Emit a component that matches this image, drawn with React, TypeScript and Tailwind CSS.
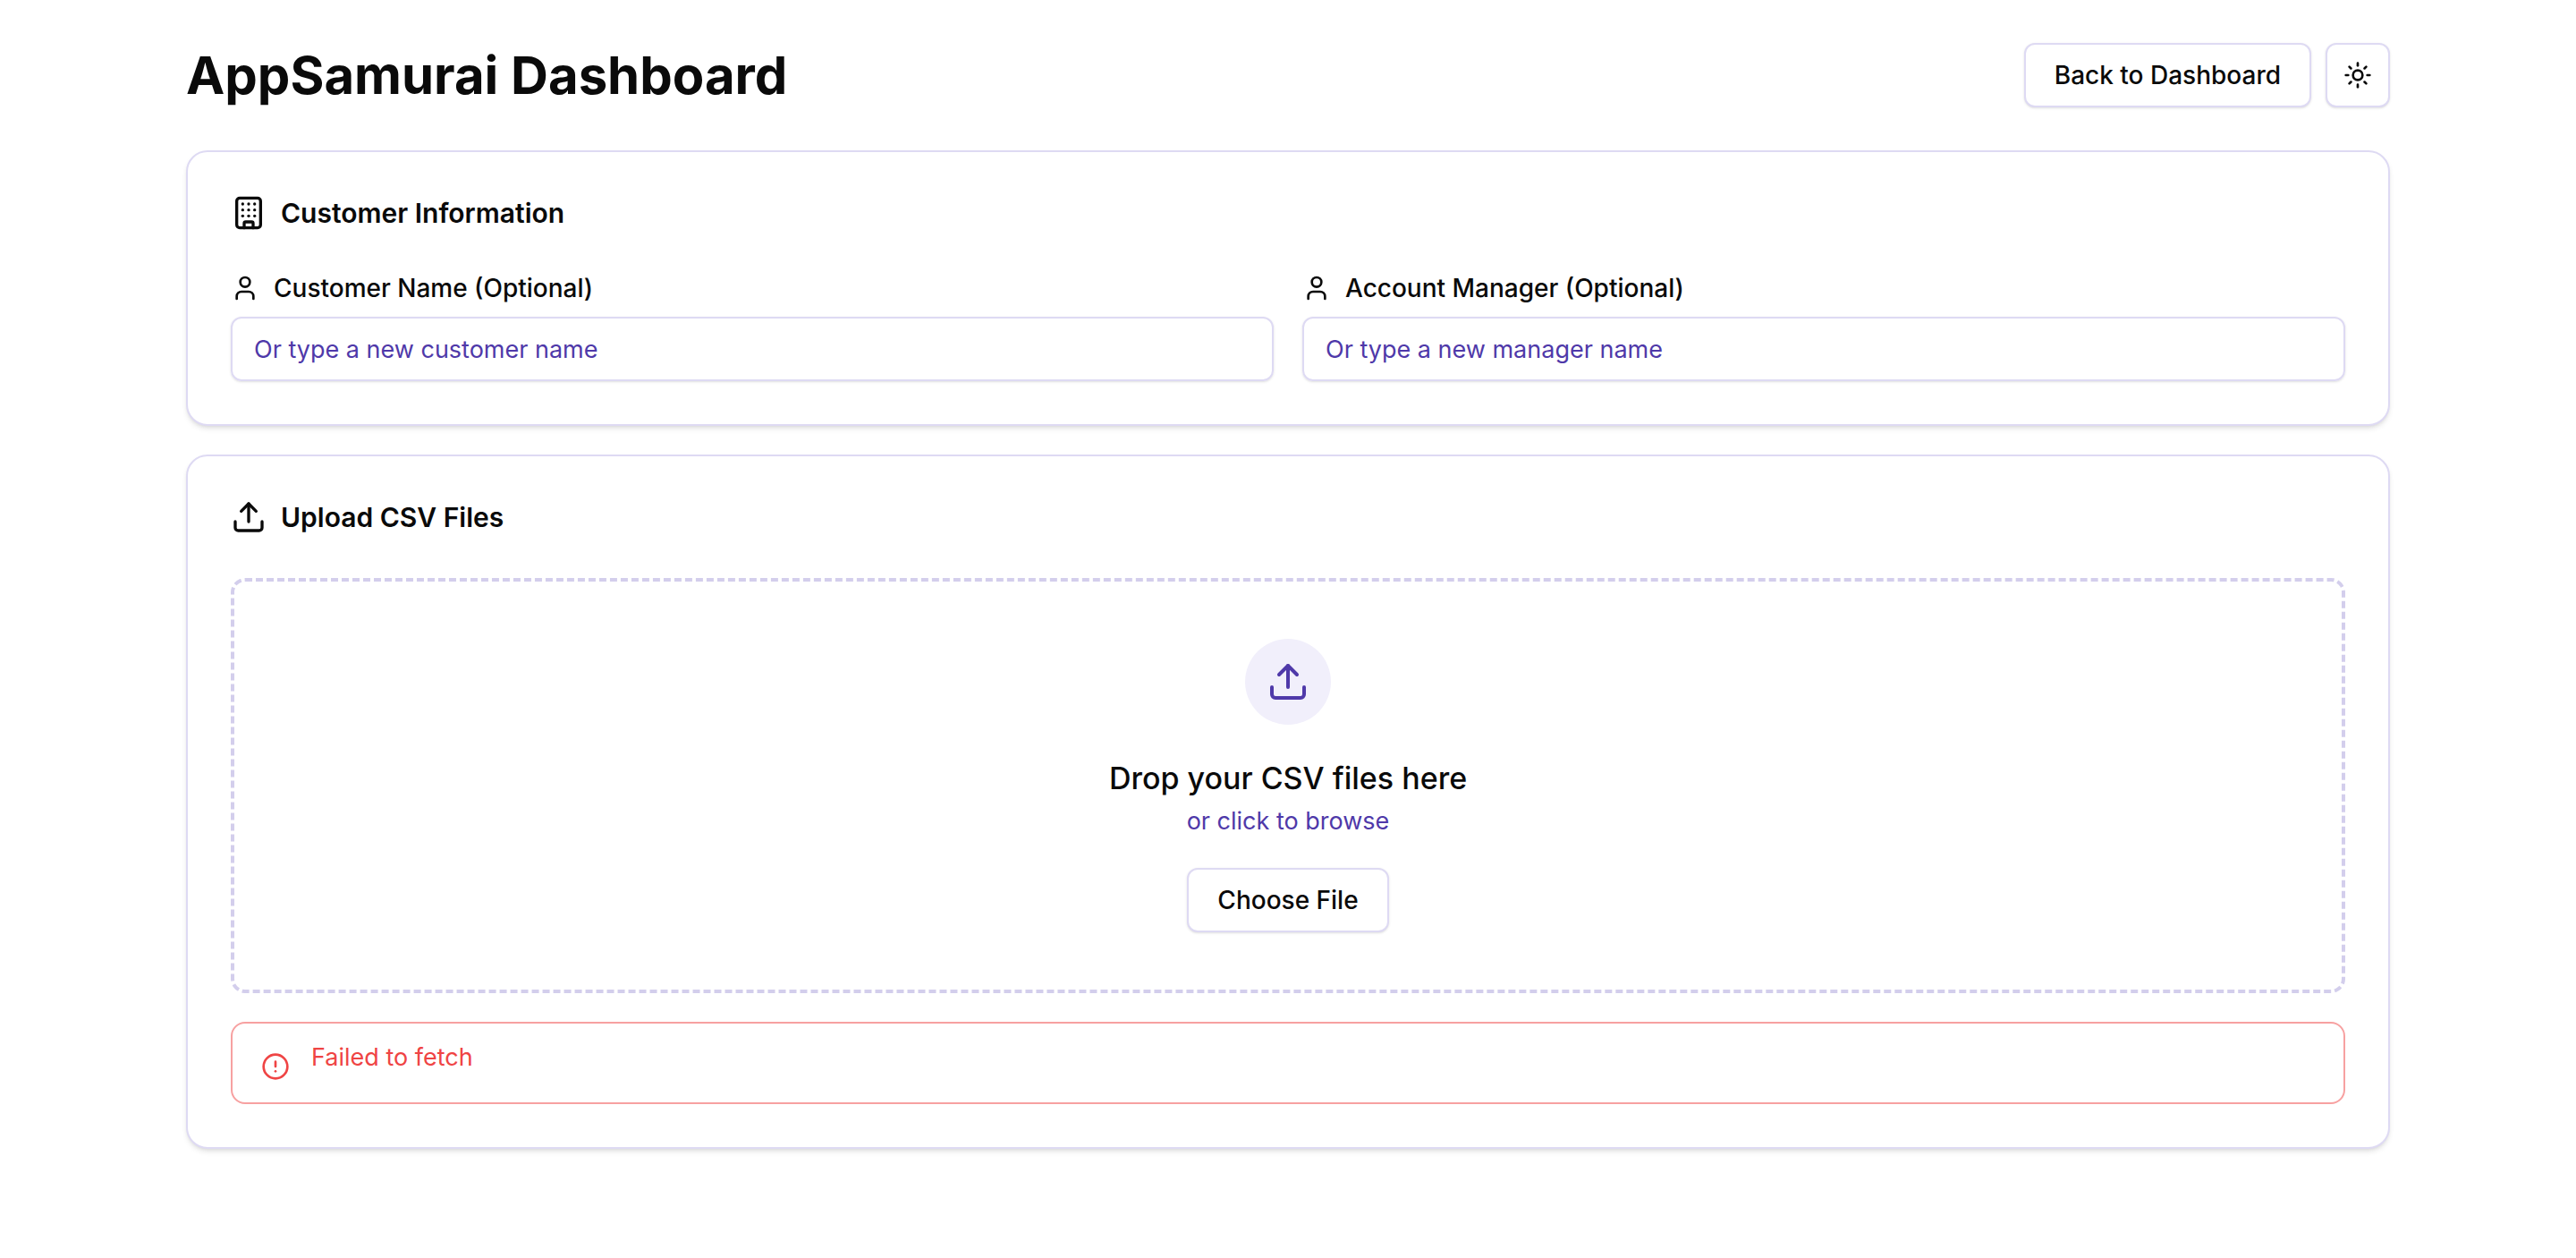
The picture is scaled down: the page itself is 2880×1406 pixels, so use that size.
import type { ReactNode } from "react";
import { Building, CircleAlert, Sun, Upload, User } from "lucide-react";

const outlineButton =
  "flex h-18 items-center justify-center rounded-xl border-2 border-[#dedaf3] bg-white text-[28px] leading-10 font-medium shadow-sm";

function Card({ icon, title, children }: { icon: ReactNode; title: string; children: ReactNode }) {
  return (
    <section className="flex flex-col gap-12 rounded-3xl border-2 border-[#dedaf3] bg-white p-12 shadow-md">
      <div className="flex items-center gap-4">
        {icon}
        <h2 className="text-[30px] leading-10 font-semibold">{title}</h2>
      </div>
      {children}
    </section>
  );
}

function Field({ id, label, placeholder }: { id: string; label: string; placeholder: string }) {
  return (
    <div className="flex flex-col gap-4">
      <label htmlFor={id} className="flex items-center gap-4 text-[28px] leading-8 font-medium">
        <User className="size-8" />
        {label}
      </label>
      <input
        id={id}
        type="text"
        placeholder={placeholder}
        className="h-18 w-full rounded-xl border-2 border-[#dedaf3] bg-transparent px-6 text-[27px] leading-10 shadow-sm placeholder:text-[#4f39a9]"
      />
    </div>
  );
}

export default function App() {
  return (
    <main className="min-h-screen bg-white font-['Inter',sans-serif] text-[#0a0a0a]">
      <div className="mx-auto flex max-w-[2560px] flex-col gap-12 p-12">
        <header className="flex items-center justify-between">
          <h1 className="text-[58px] leading-18 font-bold">AppSamurai Dashboard</h1>
          <div className="flex items-center gap-4">
            <button type="button" className={`${outlineButton} px-8`}>
              Back to Dashboard
            </button>
            <button type="button" aria-label="Toggle theme" className={`${outlineButton} w-18`}>
              <Sun className="size-8" />
            </button>
          </div>
        </header>

        <div className="flex flex-col gap-8">
          <Card icon={<Building className="size-10" />} title="Customer Information">
            <div className="grid grid-cols-2 gap-8">
              <Field id="customer" label="Customer Name (Optional)" placeholder="Or type a new customer name" />
              <Field id="manager" label="Account Manager (Optional)" placeholder="Or type a new manager name" />
            </div>
          </Card>

          <Card icon={<Upload className="size-10" />} title="Upload CSV Files">
            <div className="flex flex-col gap-8">
              <div className="flex flex-col items-center gap-8 rounded-2xl border-4 border-dashed border-[#d3ceec] p-16">
                <div className="flex size-24 items-center justify-center rounded-full bg-[#f1effb] text-[#4f39a9]">
                  <Upload className="size-12" />
                </div>
                <div className="text-center">
                  <h3 className="text-[34px] leading-14 font-medium">Drop your CSV files here</h3>
                  <p className="text-[27px] leading-10 text-[#4f39a9]">or click to browse</p>
                </div>
                <button type="button" className={`${outlineButton} px-8`}>
                  Choose File
                </button>
              </div>
              <div role="alert" className="flex items-start gap-6 rounded-2xl border-2 border-[#f7a1a1] px-8 pt-4.5 pb-6 text-[#ef4444]">
                <CircleAlert className="mt-3.5 size-8" />
                <p className="text-[27px] leading-10">Failed to fetch</p>
              </div>
            </div>
          </Card>
        </div>
      </div>
    </main>
  );
}
